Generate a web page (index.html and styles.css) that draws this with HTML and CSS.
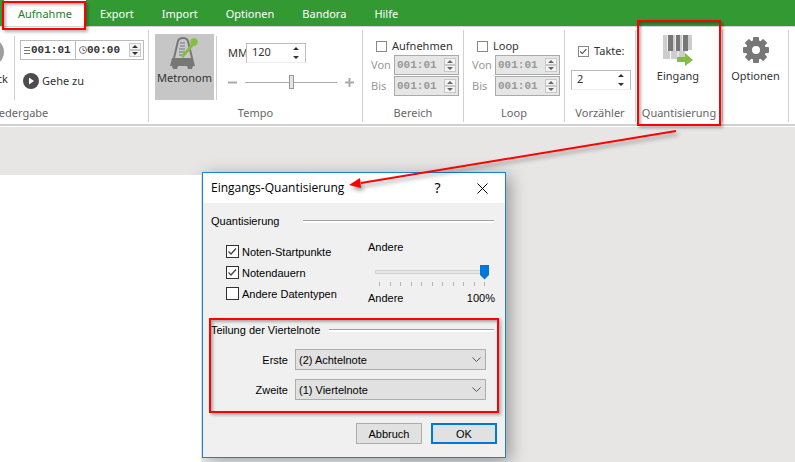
FILE: index.html
```html
<!DOCTYPE html>
<html lang="de">
<head>
    <meta charset="UTF-8">
    <meta name="viewport" content="width=device-width, initial-scale=1.0">
    <title>Eingangs-Quantisierung</title>
    <link rel="stylesheet" href="styles.css">
</head>
<body>
    <svg class="symbols" aria-hidden="true">
        <symbol id="spinner" viewBox="0 0 12 14">
            <rect x="0.5" y="0.5" width="11" height="6" fill="#f4f4f4" stroke="#c8c8c8"/>
            <rect x="0.5" y="7.5" width="11" height="6" fill="#f4f4f4" stroke="#c8c8c8"/>
            <path d="M3 5h6L6 2zM3 9h6L6 12z" fill="currentColor"/>
        </symbol>
        <symbol id="arrows" viewBox="0 0 12 14">
            <path d="M3 4h6L6 1zM3 10h6L6 13z" fill="currentColor"/>
        </symbol>
    </svg>

    <nav class="menu">
        <a class="tab active" href="#">Aufnahme<span class="frame"></span></a>
        <a class="tab" href="#">Export</a>
        <a class="tab" href="#">Import</a>
        <a class="tab" href="#">Optionen</a>
        <a class="tab" href="#">Bandora</a>
        <a class="tab" href="#">Hilfe</a>
    </nav>

    <header class="ribbon">
        <section class="group playback">
            <div class="group-body">
                <button class="back" type="button">
                    <svg width="28" height="28" viewBox="0 0 28 28"><circle cx="14" cy="14" r="14" fill="#a19d9c"/><path d="M17 8v12l-8-6z" fill="#fff"/></svg>
                    Zurück
                </button>
                <div class="divider"></div>
                <div class="position">
                    <div class="counter">
                        <svg width="6" height="8" viewBox="0 0 6 8"><path d="M0 1.5h6M0 4.5h6M0 7.5h6" stroke="#777"/></svg>
                        <input class="mono bars" type="text" value="001:01" aria-label="Position">
                        <svg width="8" height="8" viewBox="0 0 8 8"><circle cx="4" cy="4" r="3.5" fill="none" stroke="#777"/><path d="M4 2v2.5h2" fill="none" stroke="#777"/></svg>
                        <input class="mono time" type="text" value="00:00" aria-label="Zeit">
                        <svg width="12" height="14"><use href="#spinner"/></svg>
                    </div>
                    <button class="goto" type="button">
                        <svg width="16" height="16" viewBox="0 0 16 16"><circle cx="8" cy="8" r="8" fill="#4d4b4f"/><path d="M6 4.5v7L11 8z" fill="#fff"/></svg>
                        Gehe zu
                    </button>
                </div>
            </div>
            <h2>Wiedergabe</h2>
        </section>

        <section class="group tempo">
            <div class="group-body">
                <button class="metronome" type="button">
                    <svg width="31" height="33" viewBox="0 0 31 33">
                        <path d="M5 21 9 4Q10 1 14 1t5 3l4 17" fill="#c9c9c9" stroke="#777" stroke-width="2"/>
                        <path d="M11 6h5M11 9h5M10 12h6M10 15h6M10 18h5" stroke="#777"/>
                        <path d="M3 21h21l2 8H1z" fill="#777"/>
                        <path d="M3 29h6l-1 3H4zM18 29h6l-1 3h-4z" fill="#777"/>
                        <path d="M13 20 25 6" stroke="#86bc40" stroke-width="3"/>
                        <circle cx="25" cy="5" r="3.7" fill="#86bc40"/>
                    </svg>
                    Metronom
                </button>
                <div class="divider"></div>
                <div class="tempo-controls">
                    <div class="tempo-row">
                        <label for="mm">MM</label>
                        <div class="spin">
                            <input id="mm" type="text" value="120">
                            <svg width="12" height="14"><use href="#arrows"/></svg>
                        </div>
                    </div>
                    <div class="tempo-row">
                        <svg width="9" height="9" viewBox="0 0 9 9"><path d="M0 4.5h9" stroke="#aaa" stroke-width="2"/></svg>
                        <input class="tempo-slider" type="range" min="0" max="100" value="50" aria-label="Tempo">
                        <svg width="9" height="9" viewBox="0 0 9 9"><path d="M0 4.5h9M4.5 0v9" stroke="#aaa" stroke-width="2"/></svg>
                    </div>
                </div>
            </div>
            <h2>Tempo</h2>
        </section>

        <section class="group range">
            <div class="group-body">
                <label class="check"><input type="checkbox"> Aufnehmen</label>
                <div class="range-row">
                    <label for="rec-from">Von</label>
                    <div class="counter off">
                        <input id="rec-from" class="mono" type="text" value="001:01" disabled>
                        <svg width="12" height="14"><use href="#spinner"/></svg>
                    </div>
                </div>
                <div class="range-row">
                    <label for="rec-to">Bis</label>
                    <div class="counter off">
                        <input id="rec-to" class="mono" type="text" value="001:01" disabled>
                        <svg width="12" height="14"><use href="#spinner"/></svg>
                    </div>
                </div>
            </div>
            <h2>Bereich</h2>
        </section>

        <section class="group range">
            <div class="group-body">
                <label class="check"><input type="checkbox"> Loop</label>
                <div class="range-row">
                    <label for="loop-from">Von</label>
                    <div class="counter off">
                        <input id="loop-from" class="mono" type="text" value="001:01" disabled>
                        <svg width="12" height="14"><use href="#spinner"/></svg>
                    </div>
                </div>
                <div class="range-row">
                    <label for="loop-to">Bis</label>
                    <div class="counter off">
                        <input id="loop-to" class="mono" type="text" value="001:01" disabled>
                        <svg width="12" height="14"><use href="#spinner"/></svg>
                    </div>
                </div>
            </div>
            <h2>Loop</h2>
        </section>

        <section class="group count-in">
            <div class="group-body">
                <label class="check"><input type="checkbox" checked> Takte:</label>
                <div class="spin">
                    <input type="text" value="2" aria-label="Anzahl Takte">
                    <svg width="12" height="14"><use href="#arrows"/></svg>
                </div>
            </div>
            <h2>Vorzähler</h2>
        </section>

        <section class="group quantize">
            <div class="group-body">
                <button class="tool" type="button">
                    <svg width="30" height="31" viewBox="0 0 30 31">
                        <path d="M0 0h29v15h-7v9H0z" fill="#cdcdcd"/>
                        <path d="M7.5 0v24M15 0v24M22.5 0v20" stroke="#fff"/>
                        <path d="M5 0h5v16H5zM13 0h4v16h-4zM20 0h5v16h-5z" fill="#777"/>
                        <path d="M4.5 0v16M12.5 0v16M19.5 0v16" stroke="#eee"/>
                        <path d="M14 22h8v-4l8 7-8 6v-4h-8z" fill="#86bc40"/>
                    </svg>
                    Eingang
                </button>
            </div>
            <h2>Quantisierung</h2>
            <span class="frame"></span>
        </section>

        <section class="group settings">
            <div class="group-body">
                <button class="tool" type="button">
                    <svg width="28" height="31" viewBox="-14 -15 28 31">
                        <g fill="#777">
                            <circle r="10"/>
                            <rect id="tooth" x="-3" y="-13" width="6" height="26" rx="1"/>
                            <use href="#tooth" transform="rotate(45)"/>
                            <use href="#tooth" transform="rotate(90)"/>
                            <use href="#tooth" transform="rotate(135)"/>
                        </g>
                        <circle r="4" fill="#fff"/>
                    </svg>
                    Optionen
                </button>
            </div>
        </section>
    </header>

    <main class="workspace">
        <div class="sheet"></div>
        <div class="panel"></div>

        <form class="dialog" role="dialog" aria-labelledby="dialog-title">
            <div class="titlebar">
                <h1 id="dialog-title">Eingangs-Quantisierung</h1>
                <button class="caption help" type="button">?</button>
                <button class="caption" type="button" aria-label="Schließen">
                    <svg width="11" height="11" viewBox="0 0 11 11"><path d="M.5.5l10 10M10.5.5l-10 10" stroke="#000"/></svg>
                </button>
            </div>

            <div class="content">
                <div class="legend first">Quantisierung</div>
                <div class="options">
                    <div class="checks">
                        <label class="check"><input type="checkbox" checked> Noten-Startpunkte</label>
                        <label class="check"><input type="checkbox" checked> Notendauern</label>
                        <label class="check"><input type="checkbox"> Andere Datentypen</label>
                    </div>
                    <div class="strength">
                        <label for="strength">Andere</label>
                        <input id="strength" type="range" min="0" max="100" value="100">
                        <svg class="ticks" width="106" height="4" viewBox="0 0 106 4"><path d="M.5 0v4M11.5 0v4M21.5 0v4M32.5 0v4M42.5 0v4M53.5 0v4M63.5 0v4M74.5 0v4M84.5 0v4M95.5 0v4M105.5 0v4" stroke="#b4b4b4"/></svg>
                        <div class="scale"><span>Andere</span><span>100%</span></div>
                    </div>
                </div>

                <div class="division">
                    <div class="legend">Teilung der Viertelnote</div>
                    <div class="select-row">
                        <label for="first">Erste</label>
                        <select id="first"><option>(2) Achtelnote</option></select>
                    </div>
                    <div class="select-row">
                        <label for="second">Zweite</label>
                        <select id="second"><option>(1) Viertelnote</option></select>
                    </div>
                    <span class="frame"></span>
                </div>

                <div class="actions">
                    <button type="button">Abbruch</button>
                    <button class="primary" type="submit">OK</button>
                </div>
            </div>
        </form>

        <svg class="pointer" width="340" height="70" viewBox="0 0 340 70">
            <path d="M331 4 16 56" stroke="#f00" stroke-width="2"/>
            <path d="M4 58 15 51l1 10z" fill="#f00"/>
        </svg>
    </main>
</body>
</html>
```

FILE: styles.css
```css
* {
    box-sizing: border-box;
}
body {
    margin: 0;
    min-height: 100vh;
    display: flex;
    flex-direction: column;
    overflow: hidden;
    background: #e8e6e5;
    color: #333;
    font: 11px/16px "Noto Sans", "Open Sans", sans-serif;
}
button, input, select {
    font: inherit;
    color: inherit;
}
button {
    border: 0;
    padding: 0;
    background: none;
}
h1, h2 {
    margin: 0;
    font-weight: normal;
}
svg {
    flex: none;
}
.symbols {
    position: absolute;
    width: 0;
    height: 0;
}
.frame {
    position: absolute;
    border: 2px solid #f00;
    box-shadow: 2px 2px 3px rgba(0, 0, 0, 0.3), inset 2px 2px 3px rgba(0, 0, 0, 0.3);
    pointer-events: none;
    z-index: 5;
}

/* menu bar */
.menu {
    display: flex;
    height: 26px;
    padding-left: 4px;
    background: #339933;
}
.tab {
    position: relative;
    padding: 6px 14px;
    color: #fff;
    text-decoration: none;
}
.tab.active {
    background: #fff;
    color: #2c7a2c;
}
.tab .frame {
    inset: 1px 0 -4px -2px;
}

/* ribbon */
.ribbon {
    display: flex;
    height: 101px;
    padding-top: 3px;
    background: #fff;
    border-top: 1px solid #d5d5d5;
    border-bottom: 1px solid #fff;
    box-shadow: inset 0 -2px #d0d0d0;
}
.group {
    position: relative;
    flex: none;
    height: 92px;
    display: flex;
    flex-direction: column;
    border-right: 1px solid #d0d0d0;
}
.group-body {
    flex: 1;
}
.group h2 {
    height: 17px;
    font-size: 11px;
    line-height: 16px;
    text-align: center;
    color: #666;
}
.divider {
    width: 1px;
    height: 64px;
    margin-top: 6px;
    background: #d0d0d0;
}
.playback {
    width: 263px;
    margin-left: -114px;
}
.playback .group-body, .tempo .group-body {
    display: flex;
}
.playback .group-body {
    justify-content: flex-end;
    padding-right: 4px;
}
.back {
    display: flex;
    flex-direction: column;
    align-items: center;
    gap: 5px;
    padding: 8px 6px 0 0;
}
.position {
    padding: 10px 0 0 5px;
}
.counter {
    display: flex;
    align-items: center;
    height: 20px;
    border: 1px solid #bbb;
    padding: 0 2px 0 3px;
}
.counter input {
    border: 0;
    padding: 0;
    background: none;
    outline: none;
}
.mono {
    font: bold 11px/16px "Liberation Mono", monospace;
}
.counter .bars {
    width: 46px;
    height: 18px;
    margin-right: 3px;
    padding-left: 1px;
    border-right: 1px solid #bbb;
}
.counter .time {
    width: 42px;
}
.goto {
    display: flex;
    align-items: center;
    gap: 3px;
    padding: 13px 0 0 3px;
}
.tempo {
    width: 214px;
}
.metronome {
    display: flex;
    flex-direction: column;
    align-items: center;
    width: 59px;
    height: 66px;
    margin: 4px 2px 0 6px;
    padding: 3px 0;
    background: #c6c6c6;
}
.tempo-controls {
    padding: 13px 0 0 11px;
}
.tempo-row {
    display: flex;
    align-items: center;
    height: 20px;
}
.tempo-row label {
    width: 18px;
}
.tempo-row + .tempo-row {
    margin-top: 9px;
}
.tempo-slider {
    appearance: none;
    width: 92px;
    height: 14px;
    margin: 0 8px;
    background: linear-gradient(#aaa, #aaa) center / 100% 1px no-repeat;
}
.tempo-slider::-webkit-slider-thumb {
    appearance: none;
    width: 5px;
    height: 14px;
    border: 1px solid #999;
    background: #e5e5e5;
}
.spin {
    display: flex;
    align-items: center;
    width: 60px;
    height: 20px;
    padding: 0 3px 0 5px;
    border: 1px solid #bbb;
    border-bottom-color: #eee;
    background: #fff;
}
.spin input {
    width: 38px;
    height: 18px;
    margin-right: auto;
    padding: 0 0 3px;
    border: 0;
    outline: none;
    background: none;
}
.check {
    display: flex;
    align-items: center;
    gap: 5px;
}
.check input {
    appearance: none;
    flex: none;
    width: 11px;
    height: 11px;
    margin: 0;
    border: 1px solid #888;
    background: #fff;
}
.check input:checked {
    background: #fff url("data:image/svg+xml,%3Csvg xmlns='http://www.w3.org/2000/svg' viewBox='0 0 11 11'%3E%3Cpath d='M1.5 5.5 4 8l5-5.5' fill='none' stroke='%23444' stroke-width='1.3'/%3E%3C/svg%3E") center no-repeat;
}
.range {
    width: 101px;
}
.range .group-body {
    padding: 7px 4px 0 8px;
}
.range .check {
    height: 18px;
    padding-left: 5px;
}
.range-row {
    display: flex;
    align-items: center;
    justify-content: space-between;
    margin-bottom: 1px;
    color: #999;
}
.counter.off {
    width: 65px;
    padding: 0 2px;
    background: #e6e6e6;
    border-color: #aaa;
    color: #666;
}
.counter.off input {
    width: 47px;
    color: #999;
}
.count-in {
    width: 71px;
}
.count-in .group-body {
    padding: 13px 5px 0 6px;
}
.count-in .check {
    height: 16px;
    margin-bottom: 11px;
    padding-left: 7px;
}
.quantize {
    width: 87px;
}
.quantize .frame {
    inset: -10px 1px -4px 1px;
}
.settings {
    width: 66px;
}
.tool {
    display: flex;
    flex-direction: column;
    align-items: center;
    gap: 2px;
    width: 100%;
    padding-top: 5px;
}
.quantize .tool {
    padding-right: 2px;
}

/* workspace */
.workspace {
    position: relative;
    flex: 1;
    display: flex;
    padding-top: 48px;
}
.sheet {
    position: relative;
    z-index: 2;
    width: 201px;
    background: #fff;
}
.panel {
    width: 199px;
    background: #f4f4f4;
}
.pointer {
    position: absolute;
    left: 345px;
    top: 0;
    z-index: 6;
    filter: drop-shadow(2px 3px 2px rgba(0, 0, 0, 0.4));
}

/* dialog */
.dialog {
    position: absolute;
    left: 202px;
    top: 45px;
    z-index: 1;
    width: 304px;
    border: 1px solid #1883d7;
    background: #f0f0f0;
    box-shadow: 4px 4px 16px rgba(0, 0, 0, 0.35);
    color: #000;
    font: 11px/16px "Liberation Sans", Arial, sans-serif;
}
.titlebar {
    display: flex;
    align-items: center;
    height: 30px;
    padding-left: 8px;
    background: #fff;
}
.titlebar h1 {
    flex: 1;
    font: 12px/16px "Open Sans", "Noto Sans", sans-serif;
}
.caption {
    display: flex;
    align-items: center;
    justify-content: center;
    width: 45px;
    height: 30px;
}
.help {
    font: 14px/16px "Noto Sans", "Open Sans", sans-serif;
}
.content {
    padding: 10px 8px 13px;
}
.legend {
    display: flex;
    align-items: center;
    gap: 9px;
    padding-right: 3px;
}
.legend::after {
    content: "";
    flex: 1;
    height: 2px;
    border-top: 1px solid #a0a0a0;
    background: #fff;
}
.legend.first {
    gap: 23px;
}
.options {
    display: flex;
    justify-content: space-between;
    padding: 10px 2px 0 15px;
}
.checks {
    padding-top: 2px;
}
.dialog .check {
    height: 21px;
    gap: 3px;
}
.dialog .check input {
    width: 13px;
    height: 13px;
    border-color: #333;
}
.strength {
    display: flex;
    flex-direction: column;
    width: 127px;
}
.strength input {
    appearance: none;
    width: 114px;
    height: 16px;
    margin: 9px 0 0 7px;
    background: linear-gradient(#e7eaea, #e7eaea) center / 112px 2px no-repeat, linear-gradient(#d0d0d0, #d0d0d0) center / 114px 4px no-repeat;
}
.strength input::-webkit-slider-thumb {
    appearance: none;
    width: 9px;
    height: 15px;
    background: #0078d7;
    clip-path: polygon(0 0, 100% 0, 100% 70%, 50% 100%, 0 70%);
}
.ticks {
    margin: 2px 0 4px 11px;
}
.scale {
    display: flex;
    justify-content: space-between;
}
.division {
    position: relative;
    margin-top: 16px;
}
.division .frame {
    inset: -4px -2px -13px -2px;
}
.select-row {
    display: flex;
    align-items: center;
    justify-content: flex-end;
    gap: 7px;
    margin-top: 9px;
    padding-right: 11px;
}
.legend + .select-row {
    margin-top: 11px;
}
.select-row select {
    appearance: none;
    width: 191px;
    height: 21px;
    padding: 0 20px 0 3px;
    border: 1px solid #adadad;
    border-radius: 0;
    background: #e1e1e1 url("data:image/svg+xml,%3Csvg xmlns='http://www.w3.org/2000/svg' width='9' height='6'%3E%3Cpath d='M.5.5l4 4 4-4' fill='none' stroke='%23555'/%3E%3C/svg%3E") right 4px center no-repeat;
}
.actions {
    display: flex;
    justify-content: flex-end;
    gap: 9px;
    margin-top: 23px;
}
.actions button {
    width: 66px;
    height: 21px;
    border: 1px solid #adadad;
    background: #e1e1e1;
}
.actions .primary {
    border: 2px solid #0078d7;
}
```
